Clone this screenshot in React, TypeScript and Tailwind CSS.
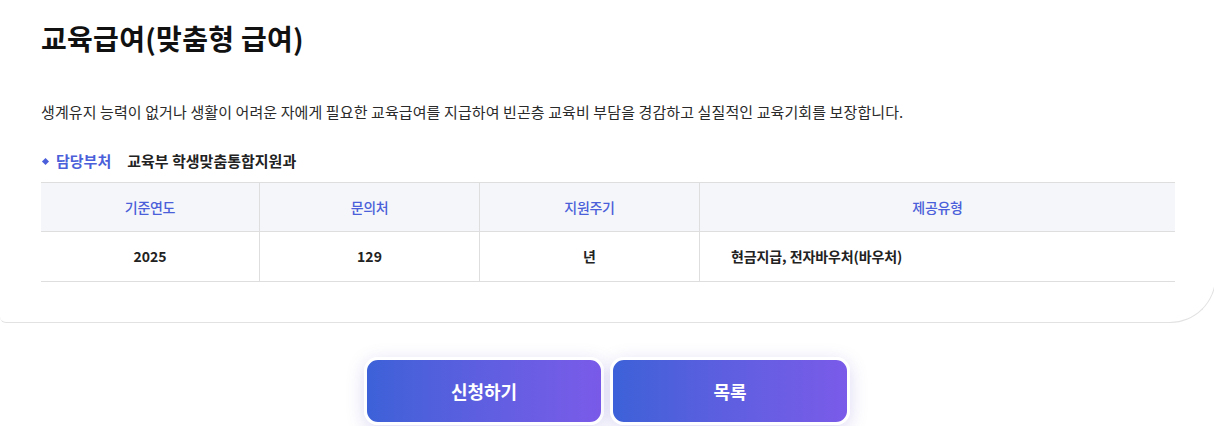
import React from "react";

const columns = ["기준연도", "문의처", "지원주기", "제공유형"];

const App: React.FC = () => {
  return (
    <div
      className="w-full h-[426px] overflow-hidden bg-white text-[#222]"
      style={{ fontFamily: '"Noto Sans CJK KR", "Noto Sans", sans-serif' }}
    >
      <div className="w-[1216px] border-b border-r border-[#e2e2e2] rounded-br-[46px] rounded-bl-[6px] pl-[41px] pt-[18px] pb-[40px]">
        <h1 className="text-[28px] leading-[40px] font-bold tracking-[0.3px] text-[#111]">
          교육급여(맞춤형 급여)
        </h1>

        <p className="mt-[43px] text-[15px] leading-[22px] text-[#2a2a2a] tracking-[0.1px]">
          생계유지 능력이 없거나 생활이 어려운 자에게 필요한 교육급여를 지급하여 빈곤층 교육비 부담을 경감하고 실질적인 교육기회를 보장합니다.
        </p>

        <div className="mt-[27px] flex items-center text-[15px] leading-[22px]">
          <span className="ml-[2px] mr-[8px] w-[5px] h-[5px] rotate-45 bg-[#4a5fd9]" />
          <span className="font-bold text-[#4a5fd9]">담당부처</span>
          <span className="ml-[16px] font-semibold text-[#222]">교육부 학생맞춤통합지원과</span>
        </div>

        <div className="mt-[10px] w-[1134px] border-t border-[#dedede]">
          <div className="grid grid-cols-[219px_220px_220px_1fr] bg-[#f5f6fa] border-b border-[#dedede]">
            {columns.map((col, i) => (
              <div
                key={col}
                className={
                  "h-[48px] flex items-center justify-center text-[14px] font-medium text-[#4a5fd9] tracking-[-0.3px] " +
                  (i < 3 ? "border-r border-[#dedede]" : "")
                }
              >
                {col}
              </div>
            ))}
          </div>
          <div className="grid grid-cols-[219px_220px_220px_1fr] border-b border-[#dedede] text-[14px] font-semibold text-[#222]">
            <div className="h-[49px] flex items-center justify-center border-r border-[#dedede]">2025</div>
            <div className="h-[49px] flex items-center justify-center border-r border-[#dedede]">129</div>
            <div className="h-[49px] flex items-center justify-center border-r border-[#dedede]">년</div>
            <div className="h-[49px] flex items-center pl-[31px] tracking-[-0.1px]">
              현금지급, 전자바우처(바우처)
            </div>
          </div>
        </div>
      </div>

      <div className="mt-[34px] flex justify-center gap-[6px]">
        <button className="w-[240px] h-[68px] rounded-[14px] border-[3px] border-white bg-gradient-to-r from-[#3c61d8] to-[#7a5be9] text-white text-[18px] font-bold shadow-[0_4px_18px_rgba(90,80,200,0.22)]">
          신청하기
        </button>
        <button className="w-[240px] h-[68px] rounded-[14px] border-[3px] border-white bg-gradient-to-r from-[#3c61d8] to-[#7a5be9] text-white text-[18px] font-bold shadow-[0_4px_18px_rgba(90,80,200,0.22)]">
          목록
        </button>
      </div>
    </div>
  );
};

export default App;
